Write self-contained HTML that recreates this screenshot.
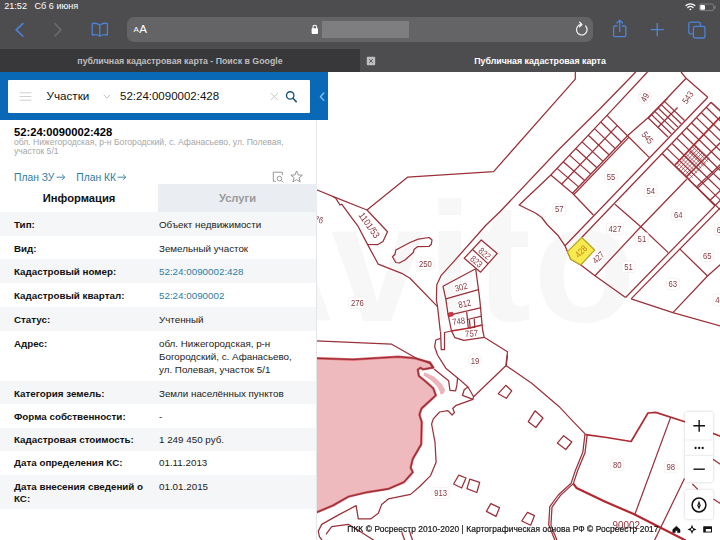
<!DOCTYPE html>
<html lang="ru">
<head>
<meta charset="utf-8">
<title>Публичная кадастровая карта</title>
<style>
*{box-sizing:border-box;margin:0;padding:0}
html,body{width:720px;height:540px;overflow:hidden;background:#fff}
body{font-family:"Liberation Sans",sans-serif;position:relative;color:#000}
.abs{position:absolute}
#chrome{position:absolute;left:0;top:0;width:720px;height:50px;background:#4d4d4f}
#tabs{position:absolute;left:0;top:49px;width:720px;height:23px;background:#4d4d4f}
#tab1{position:absolute;left:0;top:0;width:360px;height:23px;background:#38383a;color:#bdbdbf;font-size:8.8px;font-weight:bold;line-height:24px;text-align:center}
#tab2{position:absolute;left:360px;top:0;width:360px;height:23px;color:#fff;font-size:8.8px;font-weight:bold;line-height:24px;text-align:center}
#status{position:absolute;left:4.2px;top:0;color:#fff;font-size:9.1px;line-height:13px;white-space:pre}
#url{position:absolute;left:127px;top:17px;width:466px;height:25px;border-radius:7px;background:#646466}
#blur{position:absolute;left:322px;top:21px;width:87px;height:17px;background:#7e7e80}
#map{position:absolute;left:317px;top:72px;width:403px;height:468px;background:#fff;overflow:hidden}
#panel{position:absolute;left:0;top:0;width:317px;height:540px;background:#fff;border-right:1px solid #e4e6ea}
#hdr{position:absolute;left:0;top:72px;width:327.6px;height:47.7px;background:#0a69b7}
#search{position:absolute;left:8px;top:80px;width:302px;height:33px;background:#fff;border-radius:1px}
.t{position:absolute;white-space:nowrap}
.row{position:absolute;left:0;width:316px}
.lab{position:absolute;left:14px;font-weight:bold;font-size:9.8px;line-height:12px;color:#111;white-space:nowrap}
.val{position:absolute;left:159px;font-size:9.8px;line-height:12px;color:#222;white-space:nowrap}
.lnk{color:#2f7ca3}
</style>
</head>
<body>
<div id="map"></div>
<svg id="mapsvg" class="abs" style="left:0;top:0;will-change:transform" width="720" height="540" viewBox="0 0 720 540" fill="none" stroke-linejoin="round" font-family="Liberation Sans, sans-serif">
<clipPath id="mapclip"><rect x="317" y="72" width="403" height="468"/></clipPath>
<text x="214" y="321" font-size="168" font-weight="bold" letter-spacing="2" fill="#000" fill-opacity="0.03" clip-path="url(#mapclip)">Avito</text>
<!--LINES-->
<path d="M316.0,358.3 L353.3,359.5 L398.3,356.7 L415.0,358.3 L430.0,362.5 L433.3,367.5 L422.9,369.4 L420.6,367.8 L417.8,369.6 L418.8,375.8 L426.4,382.1 L433.3,388.3 L435.8,395.3 L421.5,408.5 L419.4,414.7 L421.7,422.0 L421.2,444.4 L412.8,458.9 L410.6,467.8 L412.8,472.2 L403.9,482.2 L388.3,488.9 L367.2,492.2 L348.3,496.7 L332.8,505.6 L316.0,512.6" stroke="#dc5a64" stroke-width="2.4" fill="#efbabd"/>
<path d="M316.0,358.3 L353.3,359.5 L398.3,356.7 L415.0,358.3 L430.0,362.5 L433.3,367.5 L422.9,369.4 L420.6,367.8 L417.8,369.6 L418.8,375.8 L426.4,382.1 L433.3,388.3 L435.8,395.3 L421.5,408.5 L419.4,414.7 L421.7,422.0 L421.2,444.4 L412.8,458.9 L410.6,467.8 L412.8,472.2 L403.9,482.2 L388.3,488.9 L367.2,492.2 L348.3,496.7 L332.8,505.6 L316.0,512.6" stroke="#8e2f37" stroke-width="1.1" fill="none"/>
<path d="M424.6,372.2 L434.7,377.0 L441.7,384.0 L445.1,389.7 L443.8,393.6 L440.6,394.4 L439.8,391.5 L437.0,386.3 L431.3,380.4 L423.3,375.3 Z" fill="#ecb3b8" stroke="none"/>
<path d="M316.0,340.8 L391.7,344.2 L415.0,357.5 L429.9,363.3 L433.3,368.4" stroke="#9a3039" stroke-width="1.25" fill="none"/>
<path d="M431.6,424.0 L435.0,442.2 L436.1,462.2 L430.6,475.6 L419.4,486.7 L410.6,494.4 L388.3,498.9 L381.7,504.4 L378.3,513.3 L370.6,518.9 L358.3,518.9 L356.1,505.6 L337.2,515.6 L321.7,524.4 L318.3,531.1 L319.4,536.7 L322.0,540.0" stroke="#9a3039" stroke-width="1.25" fill="none"/>
<path d="M326.0,534.4 L331.7,526.7 L348.3,524.4 L359.4,531.0 L368.3,536.7 L375.0,541.0" stroke="#9a3039" stroke-width="1.25" fill="none"/>
<path d="M401.7,532.2 L405.0,541.0" stroke="#9a3039" stroke-width="1.25" fill="none"/>
<path d="M409.4,531.0 L412.8,541.0" stroke="#9a3039" stroke-width="1.25" fill="none"/>
<path d="M472.9,399.4 L455.6,405.7 L452.8,408.5 L454.4,412.6 L452.1,415.0 L447.9,410.6 L439.6,412.0 L433.3,418.9 L431.6,424.0" stroke="#9a3039" stroke-width="1.25" fill="none"/>
<path d="M437.5,355.0 L445.8,368.2 L457.6,377.9 L468.0,387.0 L473.6,396.7 L505.8,365.8 L507.5,351.7 L484.2,337.3" stroke="#9a3039" stroke-width="1.25" fill="none"/>
<path d="M434.0,368.9 L448.6,380.7 L450.0,390.4 L455.6,390.8 L456.9,384.9 L457.6,377.9" stroke="#9a3039" stroke-width="1.25" fill="none"/>
<path d="M468.0,387.0 L464.2,389.7 L462.5,395.3 L472.9,399.4 L473.6,396.7" stroke="#9a3039" stroke-width="1.25" fill="none"/>
<path d="M437.5,355.0 L434.7,346.7 L435.8,340.0 L440.6,338.3" stroke="#9a3039" stroke-width="1.25" fill="none"/>
<path d="M440.6,331.4 L441.2,349.6 L444.5,349.6 L444.5,332.5 L451.4,331.0" stroke="#9a3039" stroke-width="1.25" fill="none"/>
<path d="M635.8,72.0 L600.0,108.7 L558.3,150.0 L500.0,211.7 L486.1,225.0 L453.5,261.8 L441.0,275.7 L436.8,284.7 L436.4,300.0 L437.5,306.4 L440.3,331.4" stroke="#9a3039" stroke-width="1.25" fill="none"/>
<path d="M575.3,72.0 L575.3,79.2 L493.6,171.6 L407.5,177.2 L367.0,210.0 L333.3,196.7 L316.0,189.5" stroke="#9a3039" stroke-width="1.25" fill="none"/>
<path d="M333.3,196.7 L335.8,198.3 L340.0,205.0 L341.7,204.2 L350.8,216.7 L358.3,226.7 L367.5,244.4 L378.3,264.2 L401.7,273.3 L410.0,278.3 L437.5,306.6" stroke="#9a3039" stroke-width="1.25" fill="none"/>
<path d="M367.0,210.0 L387.5,231.7 L383.0,241.5 L377.5,244.7 L367.5,244.5" stroke="#9a3039" stroke-width="1.25" fill="none"/>
<path d="M395.8,250.0 L410.0,242.5 L418.3,239.2 L429.2,237.5 L432.0,240.0 L431.3,244.2 L429.2,246.3 L417.5,246.7 L414.2,249.2 L413.3,252.5 L405.0,260.0 L399.2,263.0 L395.8,262.5 L392.5,256.7 L395.0,254.2 Z" stroke="#9a3039" stroke-width="1.25" fill="none"/>
<path d="M481.3,240.0 L497.2,253.5 L480.6,272.2 L464.2,258.3 Z" stroke="#9a3039" stroke-width="1.25" fill="none"/>
<path d="M472.9,249.7 L488.2,263.9" stroke="#9a3039" stroke-width="1.25" fill="none"/>
<path d="M475.7,268.8 L443.0,286.3 L445.8,298.8 L448.0,314.0 L451.4,330.7 L454.9,337.6 L463.9,340.4 L484.2,337.3 L482.6,330.0 L481.3,316.1 L479.9,300.8 L478.5,289.6 L475.7,268.8" stroke="#9a3039" stroke-width="1.25" fill="none"/>
<path d="M445.8,298.8 L478.5,289.7" stroke="#9a3039" stroke-width="1.25" fill="none"/>
<path d="M448.0,315.4 L481.3,307.6" stroke="#9a3039" stroke-width="1.25" fill="none"/>
<path d="M451.4,331.0 L468.0,328.3 L482.2,325.0" stroke="#b3272f" stroke-width="1.6" fill="none"/>
<path d="M466.7,312.0 L468.3,328.0" stroke="#9a3039" stroke-width="1.25" fill="none"/>
<path d="M467.5,319.5 L481.7,316.2" stroke="#9a3039" stroke-width="1.25" fill="none"/>
<path d="M469.4,319.8 L470.2,328.0 L474.8,327.2 L474.2,318.8" stroke="#9a3039" stroke-width="1.25" fill="none"/>
<rect x="448.2" y="312.6" width="5" height="3.6" rx="1.2" fill="#d8323c" stroke="#a8252d" stroke-width="0.7" transform="rotate(-12 450.7 314.4)"/>
<path d="M507.5,355.0 L506.3,365.8 L531.7,383.3 L559.2,406.7 L572.5,420.8 L585.8,434.7" stroke="#9a3039" stroke-width="1.2" fill="none"/>
<path d="M506.3,365.8 L505.8,365.8" stroke="#9a3039" stroke-width="1.25" fill="none"/>
<path d="M585.8,434.7 L606.7,437.5 L631.1,441.5 L648.0,413.0 L655.7,412.4 L685.6,422.0 L714.0,433.7 L721.0,436.5" stroke="#ae2c34" stroke-width="1.7" fill="none"/>
<path d="M587.2,434.6 L585.0,452.7 L577.6,470.8 L573.3,483.6 L560.5,495.4 L552.0,507.1 L550.9,525.2 L557.3,541.0" stroke="#9a3039" stroke-width="1.25" fill="none"/>
<path d="M585.0,434.2 L582.8,452.3 L575.4,470.4 L571.1,483.2 L558.3,495.0 L549.8,506.7 L548.7,524.8 L555.1,540.6" stroke="#9a3039" stroke-width="1.25" fill="none"/>
<path d="M573.3,483.6 L576.5,487.9 L605.3,501.8 L633.7,514.0 L685.7,540.5" stroke="#b3272f" stroke-width="2.2" fill="none"/>
<path d="M670.8,416.9 L635.0,514.0" stroke="#9a3039" stroke-width="1.25" fill="none"/>
<path d="M684.5,478.6 L654.4,540.5" stroke="#9a3039" stroke-width="1.25" fill="none"/>
<path d="M713.0,459.2 L721.0,464.6" stroke="#9a3039" stroke-width="1.25" fill="none"/>
<path d="M713.4,499.0 L721.0,503.8" stroke="#9a3039" stroke-width="1.25" fill="none"/>
<path d="M692.3,484.0 L697.8,489.4" stroke="#9a3039" stroke-width="1.25" fill="none"/>
<path d="M505.8,385.3 L511.7,390.8 L506.3,398.3 L498.3,393.7 Z" stroke="#9a3039" stroke-width="1.25" fill="none"/>
<path d="M535.0,410.8 L543.0,418.0 L535.8,427.5 L528.3,421.7 Z" stroke="#9a3039" stroke-width="1.25" fill="none"/>
<path d="M563.7,435.7 L571.8,442.0 L565.8,449.5 L557.3,443.1 Z" stroke="#9a3039" stroke-width="1.25" fill="none"/>
<path d="M527.5,512.4 L534.5,515.6 L530.7,525.2 L521.7,521.0 Z" stroke="#9a3039" stroke-width="1.25" fill="none"/>
<path d="M458.7,475.2 L466.0,478.0 L461.6,488.0 L453.6,484.0 Z" stroke="#9a3039" stroke-width="1.25" fill="none"/>
<path d="M469.8,479.2 L479.7,482.3 L476.8,492.5 L466.9,488.6 Z" stroke="#9a3039" stroke-width="1.25" fill="none"/>
<path d="M490.8,503.6 L499.5,507.6 L496.0,516.4 L486.4,511.4 Z" stroke="#9a3039" stroke-width="1.25" fill="none"/>
<path d="M647.5,72.0 L607.0,115.4 L550.8,175.0 L519.2,205.0 L535.8,213.3 L541.7,217.5 L547.5,225.0 L558.3,235.8 L565.0,245.8" stroke="#9a3039" stroke-width="1.25" fill="none"/>
<path d="M707.8,97.2 L565.0,245.8" stroke="#9a3039" stroke-width="1.25" fill="none"/>
<path d="M711.1,102.2 L581.7,237.5" stroke="#9a3039" stroke-width="1.25" fill="none"/>
<path d="M721.0,199.5 L625.6,297.5" stroke="#9a3039" stroke-width="1.25" fill="none"/>
<path d="M721.0,207.0 L631.1,298.9" stroke="#9a3039" stroke-width="1.25" fill="none"/>
<path d="M615.0,204.2 L640.8,226.7 L668.3,252.6" stroke="#9a3039" stroke-width="1.25" fill="none"/>
<path d="M686.7,179.2 L640.8,226.7 L595.0,275.8" stroke="#9a3039" stroke-width="1.25" fill="none"/>
<path d="M662.0,153.5 L697.8,188.6 L714.9,205.7" stroke="#9a3039" stroke-width="1.25" fill="none"/>
<path d="M679.7,248.9 L707.5,276.0" stroke="#9a3039" stroke-width="1.25" fill="none"/>
<path d="M550.8,175.0 L572.5,193.3 L593.3,215.0" stroke="#9a3039" stroke-width="1.25" fill="none"/>
<path d="M607.0,115.4 L627.5,135.8 L649.2,157.4" stroke="#9a3039" stroke-width="1.25" fill="none"/>
<path d="M721.0,264.0 L707.5,276.0 L672.9,312.6" stroke="#9a3039" stroke-width="1.25" fill="none"/>
<path d="M565.0,245.8 L567.5,251.7 L570.8,259.2 L580.8,265.0 L595.0,275.8 L625.6,297.5" stroke="#9a3039" stroke-width="1.3" fill="none"/>
<path d="M631.1,298.9 L672.9,312.6 L721.0,326.2" stroke="#9a3039" stroke-width="1.3" fill="none"/>
<path d="M581.7,237.5 L594.7,250 L580.8,265 L570.8,259.2 L567.5,251.7 Z" fill="#f6ea4e" stroke="#b9a424" stroke-width="1.2"/>
<path d="M681.0,72.0 L686.1,78.3 L707.8,97.2" stroke="#9a3039" stroke-width="1.25" fill="none"/>
<path d="M686.1,78.3 L667.5,97.8 L648.0,117.7 L627.5,135.8" stroke="#9a3039" stroke-width="1.25" fill="none"/>
<path d="M667.8,98.6 L648.6,118.2" stroke="#9a3039" stroke-width="1" fill="none"/>
<path d="M627.5,135.8 L572.5,193.3" stroke="#9a3039" stroke-width="1.25" fill="none"/>
<path d="M629.0,137.1 L573.9,194.5" stroke="#9a3039" stroke-width="1.25" fill="none"/>
<path d="M617.2,125.6 L561.6,184.2" stroke="#9a3039" stroke-width="1.25" fill="none"/>
<path d="M600.8,122.0 L621.4,142.2" stroke="#9a3039" stroke-width="1.25" fill="none"/>
<path d="M594.5,128.6 L615.3,148.6" stroke="#9a3039" stroke-width="1.25" fill="none"/>
<path d="M588.3,135.3 L609.2,155.0" stroke="#9a3039" stroke-width="1.25" fill="none"/>
<path d="M582.0,141.9 L603.1,161.4" stroke="#9a3039" stroke-width="1.25" fill="none"/>
<path d="M575.8,148.5 L596.9,167.7" stroke="#9a3039" stroke-width="1.25" fill="none"/>
<path d="M569.5,155.1 L590.8,174.1" stroke="#9a3039" stroke-width="1.25" fill="none"/>
<path d="M563.3,161.8 L584.7,180.5" stroke="#9a3039" stroke-width="1.25" fill="none"/>
<path d="M557.0,168.4 L578.6,186.9" stroke="#9a3039" stroke-width="1.25" fill="none"/>
<path d="M677.6,107.5 L658.0,127.3" stroke="#9a3039" stroke-width="1.25" fill="none"/>
<path d="M664.2,101.1 L684.5,120.5" stroke="#9a3039" stroke-width="1.25" fill="none"/>
<path d="M661.0,104.4 L681.2,123.8" stroke="#9a3039" stroke-width="1.25" fill="none"/>
<path d="M657.8,107.8 L677.9,127.1" stroke="#9a3039" stroke-width="1.25" fill="none"/>
<path d="M654.5,111.1 L674.6,130.4" stroke="#9a3039" stroke-width="1.25" fill="none"/>
<path d="M651.2,114.4 L671.3,133.7" stroke="#9a3039" stroke-width="1.25" fill="none"/>
<path d="M648.0,117.7 L668.0,137.0" stroke="#9a3039" stroke-width="1.25" fill="none"/>
<clipPath id="g3"><path d="M711.1,102.2 L730,121 L730,220 L714.9,205.7 L662,153.5 Z"/></clipPath>
<g clip-path="url(#g3)">
<path d="M711.1,102.2 L781.1,169.9" stroke="#9a3039" stroke-width="1.25" fill="none"/>
<path d="M706.2,107.3 L776.2,175.0" stroke="#9a3039" stroke-width="1.25" fill="none"/>
<path d="M701.3,112.5 L771.3,180.2" stroke="#9a3039" stroke-width="1.25" fill="none"/>
<path d="M696.4,117.6 L766.4,185.3" stroke="#9a3039" stroke-width="1.25" fill="none"/>
<path d="M691.5,122.7 L761.5,190.4" stroke="#9a3039" stroke-width="1.25" fill="none"/>
<path d="M686.5,127.8 L756.5,195.5" stroke="#9a3039" stroke-width="1.25" fill="none"/>
<path d="M681.6,133.0 L751.6,200.7" stroke="#9a3039" stroke-width="1.25" fill="none"/>
<path d="M676.7,138.1 L746.7,205.8" stroke="#9a3039" stroke-width="1.25" fill="none"/>
<path d="M671.8,143.2 L741.8,210.9" stroke="#9a3039" stroke-width="1.25" fill="none"/>
<path d="M666.9,148.4 L736.9,216.1" stroke="#9a3039" stroke-width="1.25" fill="none"/>
<path d="M662.0,153.5 L732.0,221.2" stroke="#9a3039" stroke-width="1.25" fill="none"/>
<path d="M722.0,115.1 L675.0,165.0" stroke="#b3272f" stroke-width="1.8" fill="none"/>
<path d="M722.0,163.1 L696.7,186.7" stroke="#9a3039" stroke-width="1.25" fill="none"/>
<path d="M722.0,165.3 L698.2,187.6" stroke="#9a3039" stroke-width="1.25" fill="none"/>
<path d="M722.0,141.0 L686.0,177.0" stroke="#9a3039" stroke-width="1.25" fill="none"/>
<path d="M722.0,189.0 L706.0,204.0" stroke="#9a3039" stroke-width="1.25" fill="none"/>
<path d="M696.5,146.3 L677.0,167.0" stroke="#9a3039" stroke-width="0.7" fill="none"/>
<path d="M698.6,148.3 L679.1,169.0" stroke="#9a3039" stroke-width="0.7" fill="none"/>
<path d="M700.6,150.2 L681.1,170.9" stroke="#9a3039" stroke-width="0.7" fill="none"/>
<path d="M702.7,152.2 L683.2,172.9" stroke="#9a3039" stroke-width="0.7" fill="none"/>
<path d="M704.8,154.2 L685.2,174.9" stroke="#9a3039" stroke-width="0.7" fill="none"/>
<path d="M706.8,156.2 L687.3,176.9" stroke="#9a3039" stroke-width="0.7" fill="none"/>
<path d="M708.9,158.2 L689.4,178.9" stroke="#9a3039" stroke-width="0.7" fill="none"/>
<path d="M694.5,144.3 L710.0,159.3" stroke="#9a3039" stroke-width="0.7" fill="none"/>
<path d="M692.3,146.6 L707.8,161.6" stroke="#9a3039" stroke-width="0.7" fill="none"/>
<path d="M690.2,148.9 L705.7,163.9" stroke="#9a3039" stroke-width="0.7" fill="none"/>
<path d="M688.0,151.2 L703.5,166.2" stroke="#9a3039" stroke-width="0.7" fill="none"/>
<path d="M685.8,153.5 L701.3,168.5" stroke="#9a3039" stroke-width="0.7" fill="none"/>
<path d="M683.7,155.8 L699.2,170.8" stroke="#9a3039" stroke-width="0.7" fill="none"/>
<path d="M681.5,158.1 L697.0,173.1" stroke="#9a3039" stroke-width="0.7" fill="none"/>
<path d="M679.3,160.4 L694.8,175.4" stroke="#9a3039" stroke-width="0.7" fill="none"/>
<path d="M677.2,162.7 L692.7,177.7" stroke="#9a3039" stroke-width="0.7" fill="none"/>
<path d="M675.0,165.0 L690.5,180.0" stroke="#9a3039" stroke-width="0.7" fill="none"/>
</g>
<path d="M711.1,102.2 L721.0,111.3" stroke="#9a3039" stroke-width="1.25" fill="none"/>
<!--/LINES-->
<!--LABELS-->
<g transform="translate(369.4 225.2) rotate(55)"><rect x="-17.1" y="-4.5" width="34.1" height="8.9" rx="1.5" fill="#fff" fill-opacity="0.85"/><text transform="scale(0.86 1)" text-anchor="middle" y="3.4" font-size="9.6" fill="#8c3840">1101/53</text></g>
<g transform="translate(357.4 302.8) rotate(0)"><rect x="-8.7" y="-5.6" width="17.3" height="11.3" rx="2" fill="#fff" stroke="#f5e6e7" stroke-width="0.6"/><text transform="scale(0.86 1)" text-anchor="middle" y="3.2" font-size="9" fill="#8c3840">276</text></g>
<g transform="translate(316.8 219.2) rotate(12)"><rect x="-7.5" y="-4.2" width="14.9" height="8.5" rx="1.5" fill="#fff" fill-opacity="0.85"/><text transform="scale(0.86 1)" text-anchor="middle" y="3.2" font-size="9" fill="#8c3840">276</text></g>
<g transform="translate(425.4 263.6) rotate(0)"><rect x="-8.7" y="-5.6" width="17.3" height="11.3" rx="2" fill="#fff" stroke="#f5e6e7" stroke-width="0.6"/><text transform="scale(0.86 1)" text-anchor="middle" y="3.2" font-size="9" fill="#8c3840">250</text></g>
<g transform="translate(484.7 253.5) rotate(40)"><rect x="-7.5" y="-4.2" width="14.9" height="8.5" rx="1.5" fill="#fff" fill-opacity="0.85"/><text transform="scale(0.86 1)" text-anchor="middle" y="3.2" font-size="9" fill="#8c3840">822</text></g>
<g transform="translate(476.4 261.4) rotate(40)"><rect x="-7.5" y="-4.2" width="14.9" height="8.5" rx="1.5" fill="#fff" fill-opacity="0.85"/><text transform="scale(0.86 1)" text-anchor="middle" y="3.2" font-size="9" fill="#8c3840">823</text></g>
<g transform="translate(461.1 287.0) rotate(-15)"><rect x="-7.5" y="-4.2" width="14.9" height="8.5" rx="1.5" fill="#fff" fill-opacity="0.85"/><text transform="scale(0.86 1)" text-anchor="middle" y="3.2" font-size="9" fill="#8c3840">302</text></g>
<g transform="translate(464.6 303.6) rotate(-12)"><rect x="-7.5" y="-4.2" width="14.9" height="8.5" rx="1.5" fill="#fff" fill-opacity="0.85"/><text transform="scale(0.86 1)" text-anchor="middle" y="3.2" font-size="9" fill="#8c3840">812</text></g>
<g transform="translate(458.6 321.2) rotate(-8)"><rect x="-7.5" y="-4.2" width="14.9" height="8.5" rx="1.5" fill="#fff" fill-opacity="0.85"/><text transform="scale(0.86 1)" text-anchor="middle" y="3.2" font-size="9" fill="#8c3840">748</text></g>
<g transform="translate(471.5 333.3) rotate(-5)"><rect x="-7.5" y="-4.2" width="14.9" height="8.5" rx="1.5" fill="#fff" fill-opacity="0.85"/><text transform="scale(0.86 1)" text-anchor="middle" y="3.2" font-size="9" fill="#8c3840">757</text></g>
<g transform="translate(475.0 360.3) rotate(0)"><circle r="6.5" fill="#fff" stroke="#f2dfe1" stroke-width="0.6"/><text transform="scale(0.86 1)" text-anchor="middle" y="3.2" font-size="9" fill="#8c3840">19</text></g>
<g transform="translate(440.6 492.9) rotate(0)"><rect x="-8.7" y="-5.6" width="17.3" height="11.3" rx="2" fill="#fff" stroke="#f5e6e7" stroke-width="0.6"/><text transform="scale(0.86 1)" text-anchor="middle" y="3.2" font-size="9" fill="#8c3840">913</text></g>
<g transform="translate(644.8 97.3) rotate(-60)"><circle r="6.5" fill="#fff" stroke="#f2dfe1" stroke-width="0.6"/><text transform="scale(0.86 1)" text-anchor="middle" y="3.2" font-size="9" fill="#8c3840">49</text></g>
<g transform="translate(687.7 97.3) rotate(-55)"><rect x="-7.5" y="-4.2" width="14.9" height="8.5" rx="1.5" fill="#fff" fill-opacity="0.85"/><text transform="scale(0.86 1)" text-anchor="middle" y="3.2" font-size="9" fill="#8c3840">543</text></g>
<g transform="translate(647.7 137.5) rotate(50)"><rect x="-7.5" y="-4.2" width="14.9" height="8.5" rx="1.5" fill="#fff" fill-opacity="0.85"/><text transform="scale(0.86 1)" text-anchor="middle" y="3.2" font-size="9" fill="#8c3840">545</text></g>
<g transform="translate(611.0 176.5) rotate(0)"><rect x="-6.5" y="-5.6" width="13.0" height="11.3" rx="2" fill="#fff" stroke="#f5e6e7" stroke-width="0.6"/><text transform="scale(0.86 1)" text-anchor="middle" y="3.2" font-size="9" fill="#8c3840">55</text></g>
<g transform="translate(559.2 209.2) rotate(0)"><rect x="-6.5" y="-5.6" width="13.0" height="11.3" rx="2" fill="#fff" stroke="#f5e6e7" stroke-width="0.6"/><text transform="scale(0.86 1)" text-anchor="middle" y="3.2" font-size="9" fill="#8c3840">57</text></g>
<g transform="translate(650.8 190.8) rotate(0)"><rect x="-6.5" y="-5.6" width="13.0" height="11.3" rx="2" fill="#fff" stroke="#f5e6e7" stroke-width="0.6"/><text transform="scale(0.86 1)" text-anchor="middle" y="3.2" font-size="9" fill="#8c3840">54</text></g>
<g transform="translate(678.3 214.7) rotate(0)"><rect x="-6.5" y="-5.6" width="13.0" height="11.3" rx="2" fill="#fff" stroke="#f5e6e7" stroke-width="0.6"/><text transform="scale(0.86 1)" text-anchor="middle" y="3.2" font-size="9" fill="#8c3840">64</text></g>
<g transform="translate(615.0 228.6) rotate(0)"><rect x="-8.7" y="-5.6" width="17.3" height="11.3" rx="2" fill="#fff" stroke="#f5e6e7" stroke-width="0.6"/><text transform="scale(0.86 1)" text-anchor="middle" y="3.2" font-size="9" fill="#8c3840">427</text></g>
<g transform="translate(598.3 257.5) rotate(-45)"><rect x="-7.5" y="-4.2" width="14.9" height="8.5" rx="1.5" fill="#fff" fill-opacity="0.85"/><text transform="scale(0.86 1)" text-anchor="middle" y="3.2" font-size="9" fill="#8c3840">427</text></g>
<g transform="translate(641.9 238.4) rotate(0)"><rect x="-6.5" y="-5.6" width="13.0" height="11.3" rx="2" fill="#fff" stroke="#f5e6e7" stroke-width="0.6"/><text transform="scale(0.86 1)" text-anchor="middle" y="3.2" font-size="9" fill="#8c3840">51</text></g>
<g transform="translate(628.5 266.8) rotate(0)"><rect x="-6.5" y="-5.6" width="13.0" height="11.3" rx="2" fill="#fff" stroke="#f5e6e7" stroke-width="0.6"/><text transform="scale(0.86 1)" text-anchor="middle" y="3.2" font-size="9" fill="#8c3840">51</text></g>
<g transform="translate(672.8 283.9) rotate(0)"><rect x="-6.5" y="-5.6" width="13.0" height="11.3" rx="2" fill="#fff" stroke="#f5e6e7" stroke-width="0.6"/><text transform="scale(0.86 1)" text-anchor="middle" y="3.2" font-size="9" fill="#8c3840">63</text></g>
<g transform="translate(707.3 255.8) rotate(0)"><rect x="-6.5" y="-5.6" width="13.0" height="11.3" rx="2" fill="#fff" stroke="#f5e6e7" stroke-width="0.6"/><text transform="scale(0.86 1)" text-anchor="middle" y="3.2" font-size="9" fill="#8c3840">65</text></g>
<g transform="translate(719.5 299.6) rotate(0)"><rect x="-6.5" y="-5.6" width="13.0" height="11.3" rx="2" fill="#fff" stroke="#f5e6e7" stroke-width="0.6"/><text transform="scale(0.86 1)" text-anchor="middle" y="3.2" font-size="9" fill="#8c3840">48</text></g>
<g transform="translate(721.0 229.6) rotate(0)"><rect x="-6.5" y="-5.6" width="13.0" height="11.3" rx="2" fill="#fff" stroke="#f5e6e7" stroke-width="0.6"/><text transform="scale(0.86 1)" text-anchor="middle" y="3.2" font-size="9" fill="#8c3840">66</text></g>
<g transform="translate(617.2 464.8) rotate(0)"><rect x="-6.5" y="-5.6" width="13.0" height="11.3" rx="2" fill="#fff" stroke="#f5e6e7" stroke-width="0.6"/><text transform="scale(0.86 1)" text-anchor="middle" y="3.2" font-size="9" fill="#8c3840">80</text></g>
<g transform="translate(670.8 467.1) rotate(0)"><rect x="-6.5" y="-5.6" width="13.0" height="11.3" rx="2" fill="#fff" stroke="#f5e6e7" stroke-width="0.6"/><text transform="scale(0.86 1)" text-anchor="middle" y="3.2" font-size="9" fill="#8c3840">98</text></g>
<text transform="translate(581 251.3) rotate(-45) scale(0.86 1)" text-anchor="middle" y="3.2" font-size="9" fill="#c8801c">428</text>
<text x="612.5" y="529.2" font-size="11.6" fill="#95303a" textLength="27.5" lengthAdjust="spacingAndGlyphs">90002</text>
<!--/LABELS-->
</svg>

<div id="zoomc" class="abs" style="left:685px;top:412px;width:28px;height:70px;background:#fff;border-radius:2px;box-shadow:0 0 3px rgba(0,0,0,.22)">
  <svg class="abs" style="left:0;top:0" width="28" height="70" viewBox="0 0 28 70" fill="none">
    <path d="M0 28 H28 M0 43.3 H28" stroke="#e6e6e6" stroke-width="0.8"/>
    <path d="M8.3 13.8 H20 M14.15 8 V19.7" stroke="#111" stroke-width="1.4"/>
    <circle cx="10.6" cy="36" r="1.15" fill="#111"/><circle cx="14.15" cy="36" r="1.15" fill="#111"/><circle cx="17.7" cy="36" r="1.15" fill="#111"/>
    <path d="M8.5 57.2 H19.8" stroke="#111" stroke-width="1.4"/>
  </svg>
</div>
<div id="compc" class="abs" style="left:685px;top:489.5px;width:28px;height:29px;background:#fff;border-radius:2px;box-shadow:0 0 3px rgba(0,0,0,.22)">
  <svg class="abs" style="left:0;top:0" width="28" height="29" viewBox="0 0 28 29" fill="none">
    <circle cx="14" cy="15" r="6.9" stroke="#111" stroke-width="1.5"/>
    <path d="M14 10.6 L15.7 15.4 L14 19.4 L12.3 15.4 Z" fill="#111"/><circle cx="14" cy="15.2" r="0.6" fill="#fff"/>
  </svg>
</div>
<svg class="abs" style="left:668px;top:522px" width="50" height="14" viewBox="0 0 50 14" fill="none">
  <path d="M4.8 7.6 L8.4 4.2 L12 7.6 V10.6 H9.6 V8.4 H7.2 V10.6 H4.8 Z" fill="#111" stroke="#111" stroke-width="0.6" stroke-linejoin="round"/>
  <path d="M24 2.8 L25.3 6.1 L28.6 7.4 L25.3 8.7 L24 12 L22.7 8.7 L19.4 7.4 L22.7 6.1 Z" fill="#111"/><circle cx="24" cy="7.4" r="1.1" fill="#fff"/>
  <rect x="35.2" y="4.2" width="8.8" height="6.4" rx="0.6" fill="#111"/><rect x="37.8" y="7" width="5.2" height="2.6" fill="#fff"/>
</svg>
<div class="t" id="attr" style="left:347.3px;top:524px;font-size:8.4px;letter-spacing:0.085px;line-height:11px;color:#141414;-webkit-text-stroke:0.2px #141414">ПКК © Росреестр 2010-2020 | Картографическая основа РФ © Росреестр 2017</div>
<div id="panel">
  <div class="t" id="ttl" style="left:14px;top:125.7px;font-size:11.2px;font-weight:bold;line-height:13px">52:24:0090002:428</div>
  <div class="t" id="adr" style="left:14px;top:137.8px;font-size:8.6px;line-height:9.4px;color:#a6a6a6;white-space:normal;width:285px">обл. Нижегородская, р-н Богородский, с. Афанасьево, ул. Полевая, участок 5/1</div>
  <div class="t lnk" id="pl1" style="left:14px;top:171.3px;font-size:10.3px;line-height:13px">План ЗУ<svg width="9.6" height="8" viewBox="0 0 9.6 8" style="margin-left:1.2px" fill="none"><path d="M0.6 4.2 H8.6 M5.9 1.5 L8.8 4.2 L5.9 6.9" stroke="#2f7ca3" stroke-width="0.9"/></svg></div>
  <div class="t lnk" id="pl2" style="left:76.3px;top:171.3px;font-size:10.3px;line-height:13px">План КК<svg width="9.6" height="8" viewBox="0 0 9.6 8" style="margin-left:1.2px" fill="none"><path d="M0.6 4.2 H8.6 M5.9 1.5 L8.8 4.2 L5.9 6.9" stroke="#2f7ca3" stroke-width="0.9"/></svg></div>
  <svg class="abs" style="left:270px;top:168px" width="36" height="17" viewBox="0 0 36 17" fill="none" stroke="#8c8c8c" stroke-width="0.9">
    <path d="M6 13.2 H3.3 V4.2 H12.3 V7"/><circle cx="9.4" cy="10.6" r="2.3"/><path d="M11.1 12.3 L13.4 14.6"/>
    <path d="M26.6 3 L28.2 6.9 L32.3 7.2 L29.1 9.8 L30.2 13.8 L26.6 11.6 L23 13.8 L24.1 9.8 L20.9 7.2 L25 6.9 Z" stroke-linejoin="round"/>
  </svg>
  <div class="abs" style="left:0;top:184px;width:158px;height:28px;background:#fff"></div>
  <div class="abs" style="left:158px;top:184px;width:159px;height:28px;background:#eaedf2"></div>
  <div class="t" id="tabA" style="left:0;top:191px;width:158px;text-align:center;font-size:11.2px;font-weight:bold;line-height:14px;color:#111">Информация</div>
  <div class="t" id="tabB" style="left:158px;top:191px;width:159px;text-align:center;font-size:11.2px;font-weight:bold;line-height:14px;color:#9b9b9b">Услуги</div>
  <div class="row" style="top:212px;height:24px;background:#f5f6f8"><div class="lab" style="top:6.5px">Тип:</div><div class="val" style="top:6.5px">Объект недвижимости</div></div>
  <div class="row" style="top:236px;height:23px;background:#fff"><div class="lab" style="top:6.5px">Вид:</div><div class="val" style="top:6.5px">Земельный участок</div></div>
  <div class="row" style="top:259px;height:24px;background:#f5f6f8"><div class="lab" style="top:6.5px">Кадастровый номер:</div><div class="val lnk" style="top:6.5px">52:24:0090002:428</div></div>
  <div class="row" style="top:283px;height:24px;background:#fff"><div class="lab" style="top:6.5px">Кадастровый квартал:</div><div class="val lnk" style="top:6.5px">52:24:0090002</div></div>
  <div class="row" style="top:307px;height:24px;background:#f5f6f8"><div class="lab" style="top:6.5px">Статус:</div><div class="val" style="top:6.5px">Учтенный</div></div>
  <div class="row" style="top:331px;height:50px;background:#fff"><div class="lab" style="top:6.5px">Адрес:</div><div class="val" style="top:5.5px;line-height:13px">обл. Нижегородская, р-н<br>Богородский, с. Афанасьево,<br>ул. Полевая, участок 5/1</div></div>
  <div class="row" style="top:381px;height:23px;background:#f5f6f8"><div class="lab" style="top:6.5px">Категория земель:</div><div class="val" style="top:6.5px">Земли населённых пунктов</div></div>
  <div class="row" style="top:404px;height:24px;background:#fff"><div class="lab" style="top:6.5px">Форма собственности:</div><div class="val" style="top:6.5px">-</div></div>
  <div class="row" style="top:428px;height:23px;background:#f5f6f8"><div class="lab" style="top:5.8px">Кадастровая стоимость:</div><div class="val" style="top:5.8px">1 249 450 руб.</div></div>
  <div class="row" style="top:451px;height:24px;background:#fff"><div class="lab" style="top:5.8px">Дата определения КС:</div><div class="val" style="top:5.8px">01.11.2013</div></div>
  <div class="row" style="top:475px;height:34px;background:#f5f6f8"><div class="lab" style="top:5.8px">Дата внесения сведений о<br>КС:</div><div class="val" style="top:5.8px">01.01.2015</div></div>
</div>

<div id="hdr"></div>
<div id="search">
  <svg class="abs" style="left:0;top:0" width="302" height="33" viewBox="0 0 302 33" fill="none" stroke-linecap="round">
    <path d="M12 12.8 H23 M12 16.5 H23 M12 20.2 H23" stroke="#cfcfcf" stroke-width="1"/>
    <path d="M96 15 L99 18 L102 15" stroke="#c4c4c4" stroke-width="1"/>
    <path d="M263 13.2 L269.6 19.8 M269.6 13.2 L263 19.8" stroke="#c8c8c8" stroke-width="1"/>
    <circle cx="282.2" cy="15.4" r="3.7" stroke="#1d5878" stroke-width="1.4"/>
    <path d="M285 18.3 L288.2 21.6" stroke="#1d5878" stroke-width="1.6"/>
  </svg>
  <div class="t" style="left:38.5px;top:9px;font-size:11.7px;line-height:14px;color:#111">Участки</div>
  <div class="t" style="left:112px;top:9px;font-size:11.5px;line-height:14px;color:#111">52:24:0090002:428</div>
</div>
<svg class="abs" style="left:317px;top:88px" width="10" height="18" viewBox="0 0 10 18" fill="none"><path d="M6.8 5 L3.4 8.7 L6.8 12.4" stroke="#7cc3f8" stroke-width="1.3" stroke-linecap="round" stroke-linejoin="round"/></svg>
<div id="chrome">
  <div id="status">21:52   Сб 6 июня</div>
  <div id="url"></div>
  <div id="blur"></div>

  <svg class="abs" style="left:0;top:0" width="720" height="50" viewBox="0 0 720 50" fill="none" stroke-linecap="round" stroke-linejoin="round">
    <path d="M22.8 23.6 L16.2 29.8 L22.8 36" stroke="#4b83d6" stroke-width="1.7"/>
    <path d="M55 23.6 L60.8 29.8 L55 36" stroke="#6a6a6c" stroke-width="1.7"/>
    <path d="M99.8 25.2 C97.5 23.2 94.5 23 92.2 23.6 L92.2 35 C94.5 34.4 97.5 34.6 99.8 36.2 C102.1 34.6 105.1 34.4 107.4 35 L107.4 23.6 C105.1 23 102.1 23.2 99.8 25.2 Z M99.8 25.2 L99.8 36" stroke="#4b83d6" stroke-width="1.3"/>
    <rect x="311.6" y="28.3" width="6.4" height="5.6" rx="0.8" fill="#fff" stroke="none"/>
    <path d="M313 28.5 V27 a1.8 1.8 0 0 1 3.6 0 V28.5" stroke="#fff" stroke-width="1.1"/>
    <path d="M585.6 26 A5.3 5.3 0 1 1 581.3 24.4" stroke="#f2f2f2" stroke-width="1.2"/>
    <path d="M579.6 22.2 L582 24.5 L579.6 26.8" stroke="#f2f2f2" stroke-width="1.2"/>
    <path d="M617 26 H614.6 a1 1 0 0 0 -1 1 V35.6 a1 1 0 0 0 1 1 H624.8 a1 1 0 0 0 1 -1 V27 a1 1 0 0 0 -1 -1 H622.4" stroke="#4b83d6" stroke-width="1.3"/>
    <path d="M619.7 31.5 V20.4 M616.9 23 L619.7 20.2 L622.5 23" stroke="#4b83d6" stroke-width="1.3"/>
    <path d="M651.2 29.6 H663.4 M657.3 23.5 V35.7" stroke="#4b83d6" stroke-width="1.4"/>
    <rect x="688.8" y="22.2" width="11.6" height="11.6" rx="2" stroke="#4b83d6" stroke-width="1.3"/>
    <rect x="693.4" y="26.4" width="11.6" height="11.6" rx="2" stroke="#4b83d6" stroke-width="1.3" fill="#4d4d4f"/>
    <path d="M686 5.6 A6.6 6.6 0 0 1 694.8 5.6" stroke="#fff" stroke-width="1.3"/>
    <path d="M687.8 7.5 A4 4 0 0 1 693 7.5" stroke="#fff" stroke-width="1.3"/>
    <circle cx="690.4" cy="9.3" r="0.9" fill="#fff" stroke="none"/>
    <rect x="699.3" y="4" width="14.4" height="6.6" rx="1.8" stroke="#8a8a8c" stroke-width="0.8"/>
    <rect x="700.2" y="4.9" width="4.8" height="4.8" rx="1" fill="#fff" stroke="none"/>
    <path d="M715 6.2 V8.4" stroke="#8a8a8c" stroke-width="1"/>
  </svg>
  <div class="t" style="left:133.5px;top:25px;color:#fff;font-size:8px;line-height:10px">A</div>
  <div class="t" style="left:139.3px;top:22px;color:#fff;font-size:11.6px;line-height:14px">A</div>
</div>
<div id="tabs">
  <div id="tab1">публичная кадастровая карта - Поиск в Google</div>
  <div id="tab2">Публичная кадастровая карта</div>
  <svg class="abs" style="left:365px;top:6px" width="12" height="12" viewBox="0 0 12 12"><rect x="1.8" y="1.8" width="8.4" height="8.4" rx="1" fill="#bfbfc1"/><path d="M4.2 4.2 L7.8 7.8 M7.8 4.2 L4.2 7.8" stroke="#4d4d4f" stroke-width="0.9"/></svg>
</div>
</body>
</html>
